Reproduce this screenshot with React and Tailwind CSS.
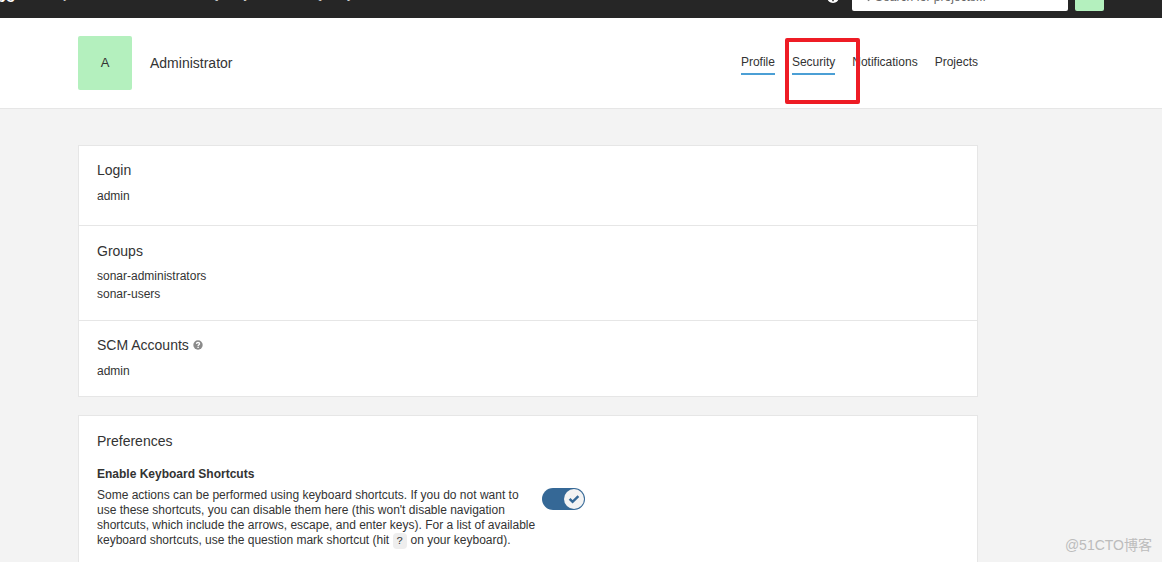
import React, { useState } from "react";

const mainLinks = ["Projects", "Issues", "Rules", "Quality Profiles", "Quality Gates"];

function TopBar() {
  return (
    <div className="flex h-[18px] flex-col justify-end overflow-hidden bg-[#262626]">
      <nav className="flex h-[43px] shrink-0 items-center pr-[58px] text-[#cccccc]">
        <a href="#home" className="-ml-[67px] flex shrink-0 items-center gap-2 text-base font-bold leading-5 text-white">
          sonarqube
        </a>
        <div className="ml-[29px] flex flex-1 gap-4 pb-1.5 text-[13px] leading-4">
          {mainLinks.map((name) => (
            <a key={name} href="#main" className="whitespace-nowrap">{name}</a>
          ))}
        </div>
        <a href="#help" aria-label="Help" className="mr-3 flex">
          <svg width="14" height="14" viewBox="0 0 14 14">
            <circle cx="7" cy="7" r="6" fill="#fff" />
            <path d="M5 5.5a2 2 0 1 1 2.8 1.8c-.6.3-.8.5-.8 1.2M7 9.8v1.4" fill="none" stroke="#262626" strokeWidth="1.5" />
          </svg>
        </a>
        <label className="flex h-[29px] w-[216px] items-center gap-1 rounded-xs bg-white px-2">
          <svg width="12" height="12" viewBox="0 0 12 12" fill="none" stroke="#777" strokeWidth="2">
            <circle cx="4.5" cy="4.5" r="3.5" />
            <path d="M7 7l3 3" />
          </svg>
          <input
            type="text"
            aria-label="Search for projects"
            placeholder="Search for projects..."
            className="w-full min-w-0 text-xs outline-none placeholder:text-[#666666]"
          />
        </label>
        <button type="button" aria-label="Account" className="ml-[7px] size-[29px] rounded-xs bg-[#b4f0be]" />
      </nav>
    </div>
  );
}

function AccountHeader() {
  return (
    <header className="border-b border-[#e6e6e6] bg-white py-[18px] pl-[78px] pr-[184px]">
      <div className="flex items-center">
        <div className="flex size-[54px] items-center justify-center rounded-xs bg-[#b4f0be] text-[13px]">A</div>
        <h1 className="ml-[18px] flex-1 text-sm">Administrator</h1>
        <nav className="flex gap-[17px] pt-[3px] text-xs leading-4">
          <a href="#profile" className="border-b-2 border-[#4b9fd5] pb-[3px]">Profile</a>
          <div className="relative">
            <a href="#security" className="block border-b-2 border-[#4b9fd5] pb-[3px]">Security</a>
            <span className="pointer-events-none absolute -left-[7px] -top-4 z-10 h-[66px] w-[75px] rounded-xs border-4 border-[#ee1c25]" />
          </div>
          <a href="#notifications">Notifications</a>
          <a href="#projects">Projects</a>
        </nav>
      </div>
    </header>
  );
}

function HelpIcon() {
  return (
    <svg width="10" height="10" viewBox="0 0 10 10" aria-label="Help" role="img">
      <circle cx="5" cy="5" r="4.7" fill="#8a8a8a" />
      <path d="M3.4 3.9C3.5 2.9 4.2 2.5 5 2.5c1 0 1.6.6 1.6 1.3C6.6 4.8 5.1 4.8 5.1 6" fill="none" stroke="#fff" strokeWidth="1.3" />
      <path d="M4.4 6.7h1.4V8H4.4z" fill="#fff" />
    </svg>
  );
}

function Toggle() {
  const [on, setOn] = useState(true);
  return (
    <button
      type="button"
      role="switch"
      aria-checked={on}
      aria-labelledby="shortcuts-label"
      onClick={() => setOn(!on)}
      className={
        "flex h-[22px] w-[43px] shrink-0 items-center rounded-full p-px " +
        (on ? "justify-end bg-[#356896]" : "justify-start bg-[#b4b4b4]")
      }
    >
      <span className="flex size-5 items-center justify-center rounded-full bg-[#f3f3f3]">
        {on && (
          <svg width="12" height="12" viewBox="0 0 12 12" fill="none" stroke="#356896" strokeWidth="2.5">
            <path d="M1.6 5.8l3 3L10.4 3.2" />
          </svg>
        )}
      </span>
    </button>
  );
}

export default function App() {
  return (
    <div className="relative h-screen overflow-hidden bg-[#f3f3f3] font-['Liberation_Sans',Arial,sans-serif] text-[#333333]">
      <TopBar />
      <AccountHeader />
      <main className="flex flex-col gap-[18px] pl-[78px] pr-[184px] pt-9 text-xs">
        <div className="divide-y divide-[#e6e6e6] border border-[#e6e6e6] bg-white">
          <section className="px-[18px] pb-5 pt-[14px]">
            <h2 className="text-sm">Login</h2>
            <p className="mt-[7px] leading-[18px]">admin</p>
          </section>
          <section className="px-[18px] pb-[17px] pt-[15px]">
            <h2 className="text-sm">Groups</h2>
            <ul className="mt-1.5 leading-[18px]">
              <li>sonar-administrators</li>
              <li>sonar-users</li>
            </ul>
          </section>
          <section className="px-[18px] pb-4 pt-[14px]">
            <h2 className="flex items-center gap-1 text-sm">
              SCM Accounts
              <HelpIcon />
            </h2>
            <p className="mt-[7px] leading-[18px]">admin</p>
          </section>
        </div>
        <section className="border border-[#e6e6e6] bg-white px-[18px] pb-12 pt-[15px]">
          <h2 className="text-sm">Preferences</h2>
          <h3 id="shortcuts-label" className="mt-[14px] font-bold leading-[18px]">Enable Keyboard Shortcuts</h3>
          <div className="mt-[5px] flex items-start gap-[5px]">
            <p className="w-[440px] leading-[15px]">
              Some actions can be performed using keyboard shortcuts. If you do not want to
              <br />
              use these shortcuts, you can disable them here (this won't disable navigation
              <br />
              shortcuts, which include the arrows, escape, and enter keys). For a list of available
              <br />
              keyboard shortcuts, use the question mark shortcut (hit{" "}
              <kbd className="rounded-sm bg-[#eeeeee] px-1 py-0.5 font-['Liberation_Mono',monospace] text-[11px]">?</kbd>{" "}
              on your keyboard).
            </p>
            <Toggle />
          </div>
        </section>
      </main>
      <div className="absolute bottom-2 right-[10px] font-['Liberation_Sans','Noto_Sans_CJK_SC',sans-serif] text-sm leading-[18px] text-[#bcbcbc]">
        @51CTO博客
      </div>
    </div>
  );
}
